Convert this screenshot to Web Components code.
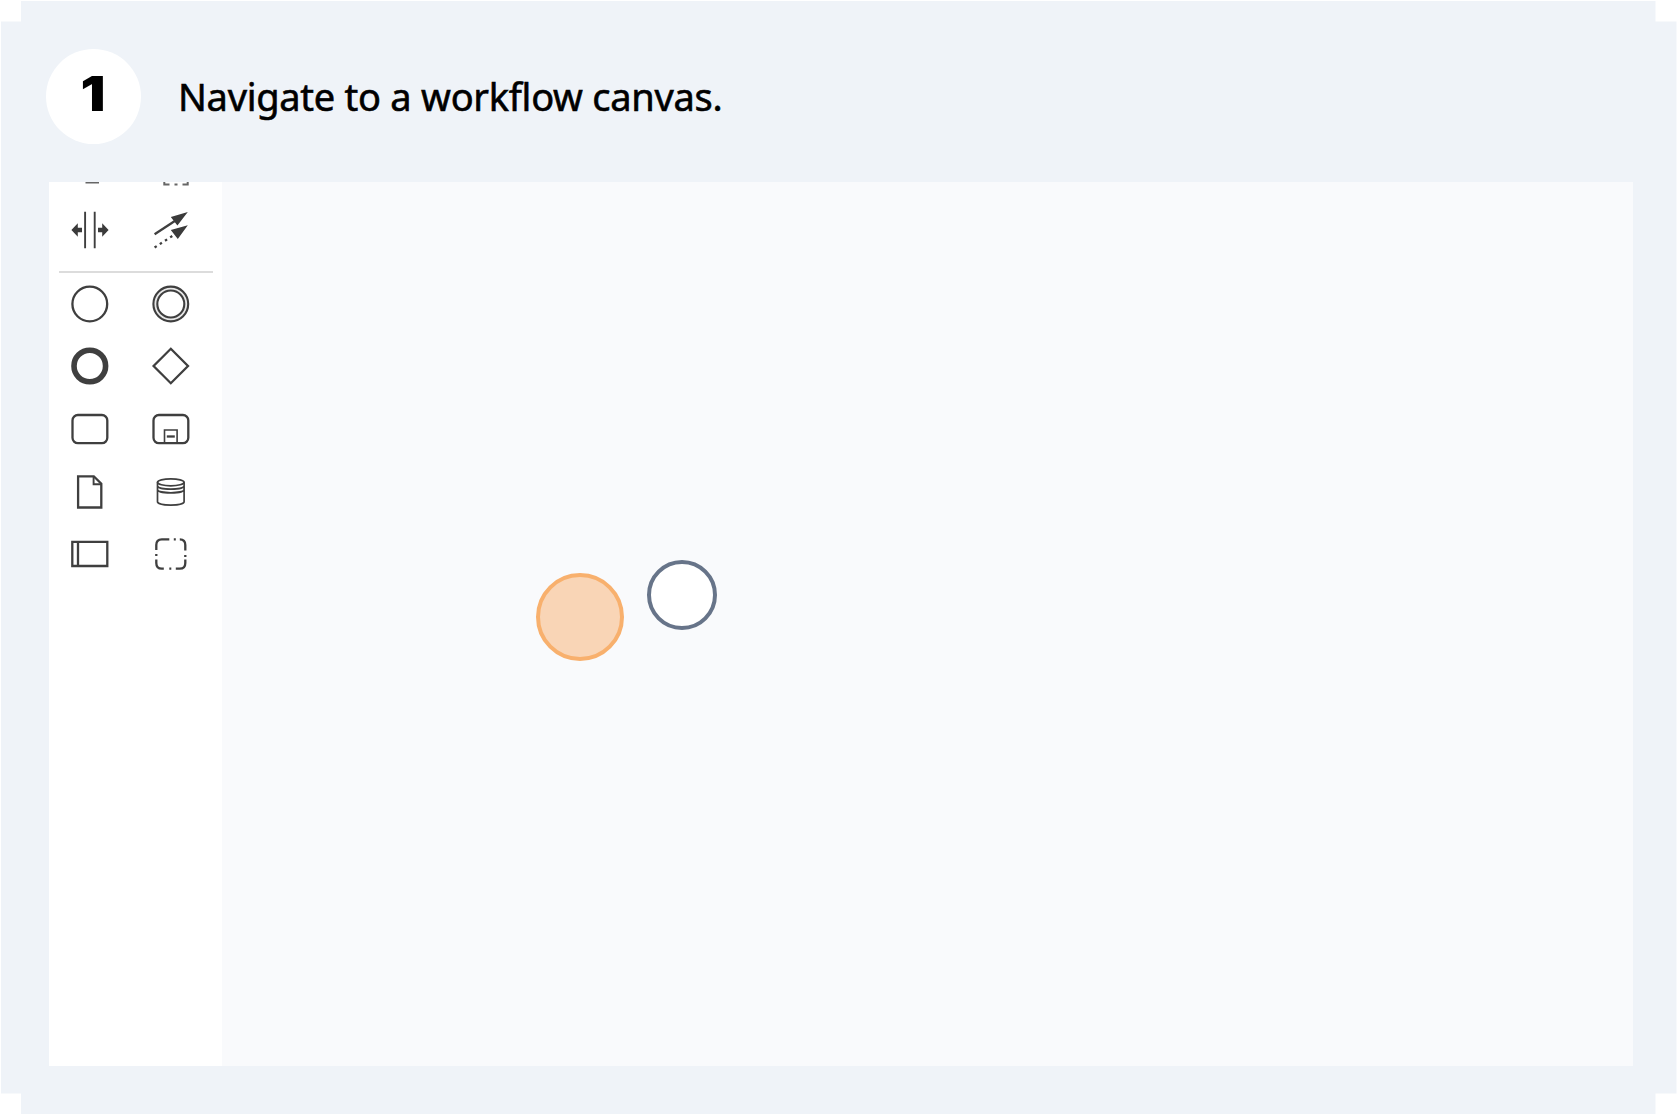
<!DOCTYPE html>
<html lang="en">
<head>
<meta charset="utf-8">
<title>Workflow step</title>
<style>
html,body{margin:0;background:#fff;height:1120px;overflow:hidden}
</style>
</head>
<body>
<step-card>
  <step-header number="1" slot="header">Navigate to a workflow canvas.</step-header>
  <workflow-editor></workflow-editor>
</step-card>
<script>
const attach = (el, html) => { el.attachShadow({mode: 'open'}).innerHTML = html; };

customElements.define('step-card', class extends HTMLElement {
  constructor() {
    super();
    attach(this, `<style>
      :host{display:flex;flex-direction:column;box-sizing:border-box;width:1675.5px;height:1113px;margin:1px 0 0 1px;
        padding:48px 43.5px 48px 44.5px;background:#eff3f8;
        clip-path:polygon(20px 0,1654.5px 0,1654.5px 20.5px,100% 20.5px,100% 1092.5px,1654.5px 1092.5px,1654.5px 100%,20px 100%,20px 1092.5px,0 1092.5px,0 20.5px,20px 20.5px)}
      .body{display:flex;flex:1;margin:38px 0 0 3.5px}
      ::slotted(workflow-editor){flex:1}
    </style><slot name="header"></slot><div class="body"><slot></slot></div>`);
  }
});

customElements.define('step-header', class extends HTMLElement {
  constructor() {
    super();
    attach(this, `<style>
      :host{display:flex;align-items:center;height:95px;gap:37.5px;color:#000}
      .badge{width:95px;height:95px;border-radius:50%;background:#fff;display:flex;align-items:center;justify-content:center;
        font:900 48.5px/1 Inter,sans-serif;padding-bottom:5px;box-sizing:border-box}
      .badge span{transform:scaleX(1.14)}
      .text{font:400 38px/50px "Noto Sans",sans-serif;white-space:nowrap;padding-bottom:2px;letter-spacing:-0.27px;-webkit-text-stroke:.6px #000}
    </style><div class="badge"><span>${this.getAttribute('number')}</span></div><div class="text"><slot></slot></div>`);
  }
});

customElements.define('workflow-editor', class extends HTMLElement {
  constructor() {
    super();
    attach(this, `<style>
      :host{display:flex;background:#f9fafc}
    </style><tool-palette></tool-palette><workflow-canvas></workflow-canvas>`);
  }
});

const ICONS = {
  space: '<path d="M-4.7-18.2V18.3M4.9-18.2V18.3" stroke-width="1.9"/><path class="f" d="M-18.4 0l6.4-6.8v4.5h4.2v4.6h-4.2v4.5zM18.8 0l-6.4-6.8v4.5H8.2v4.6h4.2v4.5z"/>',
  connect: '<path d="M-16.2 4.2L4-9"/><path class="f" d="M17-18L0-13 6.6-4.4zM17-4.7L0 .1 7 8.9z"/><path d="M-16.2 17.5L3 5" stroke-dasharray="2.5 3.7" stroke-width="2.3"/>',
  start: '<circle r="17.4"/>',
  intermediate: '<circle r="15.5" stroke="#e8e8e8" stroke-width="3"/><circle r="17.4" stroke-width="2.1"/><circle r="13.5" stroke-width="2.1"/>',
  end: '<circle r="15.8" stroke-width="5.6"/>',
  gateway: '<path d="M0-17.2L17.2 0 0 17.2-17.2 0z"/>',
  task: '<rect x="-17.3" y="-14" width="34.8" height="28.2" rx="5.4"/>',
  subprocess: '<rect x="-17.3" y="-14" width="34.8" height="28.2" rx="5.4"/><path d="M-6.3 14V1H6.3v13" stroke-width="1.6"/><path d="M-4 7.5H4"/>',
  data: '<path d="M-11.7-15.7H4L11.5-8.2V15.5H-11.7z"/><path d="M3.8-15.5V-7.8H11.5" stroke-width="1.9"/>',
  store: '<g stroke-width="1.7"><ellipse cy="-9.7" rx="13.3" ry="3.5"/><path d="M-13.3-9.7V9.8C-13.3 14.2 13.3 14.2 13.3 9.8V-9.7M-13.3-6.2C-13.3-1.7 13.3-1.7 13.3-6.2M-13.3-2.6C-13.3 1.9 13.3 1.9 13.3-2.6"/></g>',
  pool: '<path d="M-17.5-12.2H17.5V12H-17.5zM-11.8-12.2V12"/>',
  group: '<path d="M-14.5-4V-9Q-14.5-14.7-9-14.7H-1.5M9-14.7Q14.5-14.7 14.5-9V-3.5M14.5 5.5V9Q14.5 14.7 9 14.7H5M-7 14.7H-9Q-14.5 14.7-14.5 9V5.5"/><path d="M3-14.7h2M-1.5 14.7h2M-14.5 0v2M14.5 1v2"/>'
};

customElements.define('palette-tool', class extends HTMLElement {
  constructor() {
    super();
    attach(this, `<style>
      :host{display:flex;align-items:center;justify-content:center;width:81px;height:62.7px}
      svg{width:42px;height:42px;fill:none;stroke:#3f3f3f;stroke-width:2.3;display:block}
      .f{fill:#3b3b3b;stroke:none}
    </style><svg viewBox="-20.8 -21 42 42">${ICONS[this.getAttribute('icon')]}</svg>`);
  }
});

customElements.define('tool-palette', class extends HTMLElement {
  constructor() {
    super();
    const tools = names => names.map(n => `<palette-tool icon="${n}"></palette-tool>`).join('');
    attach(this, `<style>
      :host{display:block;width:173.3px;background:#fff;flex:none}
      .grid{display:grid;grid-template-columns:81px 81px}
      .cut{display:block;width:162px;height:16.5px}
      hr{border:0;height:2px;background:#dcdcdc;margin:9.6px 9px -.6px 9.5px}
    </style>
    <svg class="cut" viewBox="0 0 162 16.5" fill="none" stroke="#666" stroke-width="1.4"><path d="M36.5 .8H50"/><path d="M115.3 0V2.4H120.5M125.5 2.4h3M133.5 2.4h5.2V0" stroke-width="2"/></svg>
    <div class="grid">${tools(['space', 'connect'])}</div><hr>
    <div class="grid">${tools(['start','intermediate','end','gateway','task','subprocess','data','store','pool','group'])}</div>`);
  }
});

customElements.define('workflow-canvas', class extends HTMLElement {
  constructor() {
    super();
    attach(this, `<style>
      :host{display:block;flex:1;position:relative;background:#f9fafc}
      .node,.pointer{position:absolute;box-sizing:border-box;border-radius:50%}
      .node{left:424.7px;top:378px;width:70px;height:70px;border:4px solid #677489;background:#fff}
      .pointer{left:314px;top:391px;width:88px;height:88px;border:4px solid #f8b06d;background:#f9d5b6}
    </style><div class="pointer"></div><div class="node"></div>`);
  }
});
</script>
</body>
</html>
